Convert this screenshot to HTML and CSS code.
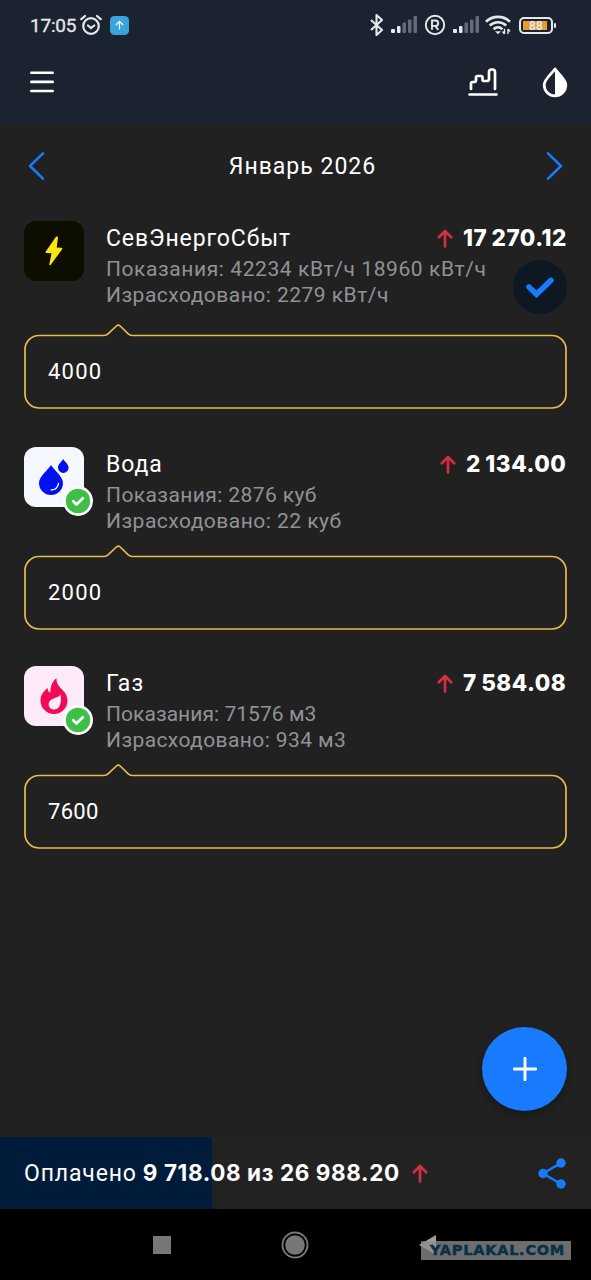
FILE: index.html
```html
<!DOCTYPE html>
<html lang="ru">
<head>
<meta charset="utf-8">
<title>Январь 2026</title>
<link rel="stylesheet" href="styles.css">
</head>
<body>
<svg class="defs" width="0" height="0">
  <symbol id="up" viewBox="0 0 16 19"><path d="M8 17.5V2M1.8 8.2L8 2l6.2 6.2" fill="none" stroke="#d0303f" stroke-width="2.7" stroke-linecap="round" stroke-linejoin="round"/></symbol>
  <symbol id="bubble" viewBox="0 0 543 86"><path d="M15 12.500H80q2.500 0 4.300-1.800L92.400 3Q94.300 1.200 96.200 3L104 10.700Q105.800 12.500 108.300 12.500H528A14 14 0 0 1 542 26.500V71A14 14 0 0 1 528 85H15A14 14 0 0 1 1 71V26.500A14 14 0 0 1 15 12.500Z" fill="none" stroke="#e6bc4a" stroke-width="1.700"/></symbol>
  <symbol id="paid" viewBox="0 0 30 30"><circle cx="15" cy="15" r="15" fill="#fff"/><circle cx="15" cy="15" r="12.200" fill="#3fbf48"/><path d="M10.200 15.300l3.300 3.200 6.300-6.200" fill="none" stroke="#fff" stroke-width="2.700" stroke-linecap="round" stroke-linejoin="round"/></symbol>
  <symbol id="signal" viewBox="0 0 27 18"><g fill="#e6e8ec"><rect x="0" y="13" width="4" height="4" rx="1"/><rect x="6" y="10" width="3.500" height="7" rx="1"/></g><g fill="#646b78"><rect x="11.500" y="6.500" width="3.500" height="10.500" rx="1"/><rect x="17" y="3.500" width="3.500" height="13.500" rx="1"/><rect x="22.500" y="0" width="3.500" height="17" rx="1"/></g></symbol>
</svg>
<main class="screen">
  <header class="top">
    <div class="status">
      <span class="clock">17:05</span>
      <svg class="alarm" width="22" height="22" viewBox="0 0 22 22" fill="none" stroke="#e6e8ec" stroke-width="2.200" stroke-linecap="round"><circle cx="11" cy="12" r="7.800"/><path d="M1.300 5.200L5 2M20.700 5.200L17 2M8 11.500l3 2.500 3.200-2.500"/></svg>
      <svg class="upload" width="19" height="19" viewBox="0 0 19 19"><rect width="19" height="19" rx="4.500" fill="#3ba3dc"/><path d="M9.500 13.500V5.300M5.800 9l3.700-3.700L13.200 9" fill="none" stroke="#fff" stroke-width="1.200"/></svg>
      <div class="indicators">
        <svg width="14" height="22" viewBox="0 0 14 22" fill="none" stroke="#e6e8ec" stroke-width="2.100" stroke-linejoin="round"><path d="M1 6l11 10-5.500 5V1L12 6 1 16"/></svg>
        <svg class="bars" width="27" height="18"><use href="#signal"/></svg>
        <svg class="reg" width="22" height="22" viewBox="0 0 22 22" fill="none" stroke="#e6e8ec" stroke-width="1.900"><circle cx="11" cy="11" r="9.200"/><path d="M8 15.800V6.500h3.500a2.700 2.700 0 0 1 0 5.400H8M11.300 12l3 3.800"/></svg>
        <svg class="bars" width="27" height="18"><use href="#signal"/></svg>
        <svg class="wifi" width="26" height="20" viewBox="0 0 26 20" fill="none" stroke="#e6e8ec" stroke-width="2.700"><path d="M1 6.800C7.500.2 18.500.2 25 6.800M4.800 10.600c4.800-4.500 11.600-4.500 16.400 0M8.600 14.200c2.600-2.400 6.200-2.400 8.800 0"/><path d="M10 16.200h6l-3 3z" fill="#e6e8ec" stroke="none"/><path d="M19.500 18.800v-5M19.500 19l-2-2.500M23 14v5M23 14l2 2.500" stroke-width="1.400"/></svg>
        <div class="battery"><span class="level">88</span></div>
      </div>
    </div>
    <div class="toolbar">
      <svg width="24" height="22" viewBox="0 0 24 22" stroke="#fff" stroke-width="2.600" stroke-linecap="round"><path d="M1.300 1.800h21.400M1.300 10.900h21.400M1.300 20h21.400"/></svg>
      <div class="tools">
        <svg width="30" height="28" viewBox="0 0 30 28" fill="none" stroke="#fff" stroke-width="2.700" stroke-linecap="round" stroke-linejoin="round"><path d="M1.500 26.500h27M3 21v-5.500q0-1.500 1.500-1.500H6q2 0 2-2V9.500Q8 8 9.500 8H13q1.500 0 1.500 1.500v2q0 1.500 1.500 1.500h3q2 0 2-2V4q0-2.500 2.500-2.500h1Q27 1.500 27 4v17"/></svg>
        <svg width="26" height="32" viewBox="0 0 26 32"><path d="M13 3C10 7.500 2.200 13 2.200 19a10.800 10.800 0 0 0 21.600 0C23.800 13 16 7.500 13 3Z" fill="none" stroke="#fff" stroke-width="2.800" stroke-linejoin="round"/><path d="M13 2c3 5 11 11 11 17a11 11 0 0 1-11 11z" fill="#fff"/></svg>
      </div>
    </div>
  </header>

  <nav class="month">
    <svg width="17" height="28" viewBox="0 0 17 28"><path d="M15 1.300L2 14l13 12.700" fill="none" stroke="#187bfd" stroke-width="2.500" stroke-linecap="round" stroke-linejoin="round"/></svg>
    <span class="month-name">Январь 2026</span>
    <svg width="17" height="28" viewBox="0 0 17 28"><path d="M2 1.300L15 14 2 26.700" fill="none" stroke="#187bfd" stroke-width="2.500" stroke-linecap="round" stroke-linejoin="round"/></svg>
  </nav>

  <section class="bills">
    <article class="bill tall">
      <div class="summary">
        <div class="tile power"><svg width="20" height="32" viewBox="0 0 20 32"><path d="M11.800 2L1.800 16.500q-.8 1.300.7 1.500l5 .3-2.200 11q0 1.500 1.300.6L18 14.500q.9-1.500-.7-1.700l-4.600-.3L14 2.500Q13.300.3 11.800 2Z" fill="#ffe414"/></svg></div>
        <div class="info">
          <div class="line"><span class="name n1">СевЭнергоСбыт</span><span class="sum"><svg width="16" height="19"><use href="#up"/></svg><b class="s1">17 270.12</b></span></div>
          <div class="detail d1">Показания: 42234 кВт/ч 18960 кВт/ч</div>
          <div class="detail d2">Израсходовано: 2279 кВт/ч</div>
        </div>
        <svg class="confirm" width="54" height="54" viewBox="0 0 54 54"><circle cx="27" cy="27" r="27" fill="#0e1822"/><path d="M16 27l7.500 7.300L38 20.300" fill="none" stroke="#187bfd" stroke-width="5.500" stroke-linecap="round"/></svg>
      </div>
      <div class="amount"><svg class="outline" width="543" height="86"><use href="#bubble"/></svg><span class="value">4000</span></div>
    </article>
    <article class="bill">
      <div class="summary">
        <div class="tile water"><svg width="32" height="38" viewBox="0 0 32 38"><path d="M13 7C10 12 1 18.500 1 25a12 12 0 0 0 24 0C25 18.500 16 12 13 7ZM25.200 1c-1.400 2.600-5.200 5.200-5.200 8.600a5.300 5.300 0 0 0 10.600 0C30.600 6.200 26.600 3.600 25.200 1Z" fill="#0010f0"/><path d="M20.500 25.500c-.6 3.800-3.600 6.300-7.200 6.500" fill="none" stroke="#f6f8ff" stroke-width="1.500" stroke-linecap="round"/></svg><svg class="badge" width="30" height="30"><use href="#paid"/></svg></div>
        <div class="info">
          <div class="line"><span class="name n2">Вода</span><span class="sum"><svg width="16" height="19"><use href="#up"/></svg><b class="s2">2 134.00</b></span></div>
          <div class="detail">Показания: 2876 куб</div>
          <div class="detail d2">Израсходовано: 22 куб</div>
        </div>
      </div>
      <div class="amount"><svg class="outline" width="543" height="86"><use href="#bubble"/></svg><span class="value">2000</span></div>
    </article>
    <article class="bill">
      <div class="summary">
        <div class="tile gas"><svg width="28" height="36" viewBox="0 0 28 36"><path d="M16.500 0C12 4 10.500 8.500 10.200 15 8.500 14 7.800 12 7.500 10 3.500 13.500.5 17 .5 22.500a13.500 13.500 0 0 0 27 0c0-4.500-2-7.500-5-10.500C18.500 8 16.200 5 16.500 0Z" fill="#f20a55"/><path d="M20.500 16.500C19 20.500 9 19.500 8.600 26c0 3.300 2.500 5.500 5.600 5.500 5 0 7.900-6 6.300-15Z" fill="#ffeafa"/></svg><svg class="badge" width="30" height="30"><use href="#paid"/></svg></div>
        <div class="info">
          <div class="line"><span class="name n3">Газ</span><span class="sum"><svg width="16" height="19"><use href="#up"/></svg><b class="s3">7 584.08</b></span></div>
          <div class="detail d5">Показания: 71576 м3</div>
          <div class="detail">Израсходовано: 934 м3</div>
        </div>
      </div>
      <div class="amount"><svg class="outline" width="543" height="86"><use href="#bubble"/></svg><span class="value v3">7600</span></div>
    </article>
  </section>

  <button class="add" aria-label="Добавить"><svg width="24" height="24" viewBox="0 0 24 24"><path d="M12 1.300v21.400M1.300 12h21.400" stroke="#fff" stroke-width="2.900" stroke-linecap="round"/></svg></button>

  <footer class="total">
    <span class="paid-label">Оплачено</span><b class="paid-sum">9 718.08 из 26 988.20</b>
    <svg class="trend" width="16" height="19"><use href="#up"/></svg>
    <svg class="share" width="28" height="31" viewBox="0 0 28 31" fill="#187bfd"><path d="M23 5L5 15.500 23 26" fill="none" stroke="#187bfd" stroke-width="2.500"/><circle cx="23" cy="5" r="4.700"/><circle cx="5" cy="15.500" r="4.700"/><circle cx="23" cy="26" r="4.700"/></svg>
  </footer>

  <div class="system">
    <span class="recent"></span>
    <svg class="home" width="28" height="28" viewBox="0 0 28 28"><circle cx="14" cy="14" r="12.500" fill="none" stroke="#777" stroke-width="1.900"/><circle cx="14" cy="14" r="9.800" fill="#777"/></svg>
    <svg class="back" width="19" height="20" viewBox="0 0 19 20"><path d="M18 0v20L1 10z" fill="#a0a0a0"/></svg>
    <span class="watermark">YAPLAKAL.COM</span>
  </div>
</main>
</body>
</html>
```
FILE: styles.css
```css
* { box-sizing: border-box; }
body { margin: 0; background: #212121; color: #fff; font-family: Roboto, "Noto Sans", sans-serif; }
svg { display: block; flex: none; }
.defs { position: absolute; }
.screen { position: relative; width: 591px; height: 1280px; overflow: hidden; display: flex; flex-direction: column; background: #212121; }

.top { height: 124px; background: #1b2330; flex: none; }
.status { display: flex; align-items: center; height: 50px; padding: 0 35px 0 30px; color: #e6e8ec; }
.clock { width: 50px; font-size: 19px; font-weight: 400; letter-spacing: -.2px; -webkit-text-stroke: .3px #e6e8ec; white-space: nowrap; line-height: 24px; padding-top: 2px; }
.upload { margin-left: 8px; }
.indicators { display: flex; align-items: center; margin-left: auto; }
.bars { margin-left: 7px; }
.reg { margin-left: 6px; }
.wifi { margin-left: 5px; }
.battery { position: relative; display: flex; width: 34px; height: 17px; padding: 2px; margin-left: 8px; margin-right: 3px; border: 2px solid #e6e8ec; border-radius: 5px; }
.battery::after { content: ""; position: absolute; right: -5px; top: 4px; width: 2px; height: 5px; background: #e6e8ec; border-radius: 1px; }
.level { width: 24px; height: 9px; background: #e59b2d; font-size: 12px; font-weight: 700; line-height: 10px; text-align: center; padding-left: 2px; }
.toolbar { display: flex; justify-content: space-between; align-items: center; height: 64px; padding: 0 23px 0 30px; }
.tools { display: flex; align-items: center; gap: 44px; }

.month { display: flex; align-items: center; justify-content: space-between; height: 84px; padding: 0 28px; flex: none; }
.month-name { margin-left: 14px; font-size: 23px; letter-spacing: 1px; white-space: nowrap; }

.bills { padding: 13px 24px 0; }
.bill { height: 219px; }
.bill.tall { height: 226px; }
.summary { display: flex; position: relative; height: 97px; gap: 22px; }
.tall .summary { height: 102px; }
.tile { position: relative; display: flex; align-items: center; justify-content: center; width: 60px; height: 60px; border-radius: 12px; flex: none; }
.power { background: #0d0d00; }
.water { background: #f6f8ff; }
.gas { background: #ffeafa; }
.badge { position: absolute; left: 39px; top: 39px; }
.info { flex: 1; padding-top: 3px; }
.line { display: flex; justify-content: space-between; align-items: center; height: 28px; }
.name { font-size: 23px; white-space: nowrap; }
.n1, .n2 { letter-spacing: .9px; }
.n3 { letter-spacing: 1.3px; }
.sum { display: flex; align-items: center; gap: 10px; font-size: 22.500px; white-space: nowrap; }
.sum b { padding-bottom: 2px; font-family: Inter, Roboto, sans-serif; font-weight: 850; word-spacing: -1px; }
.s1 { width: 104px; letter-spacing: .5px; }
.s2 { width: 101px; letter-spacing: .55px; }
.s3 { width: 104px; letter-spacing: .5px; }
.detail { height: 26px; line-height: 35px; font-size: 21px; color: #929296; white-space: nowrap; letter-spacing: .4px; }
.detail.d1 { letter-spacing: .58px; }
.detail.d2 { letter-spacing: .48px; }
.detail.d5 { letter-spacing: .05px; }
.confirm { position: absolute; right: 0; top: 39px; }
.amount { position: relative; display: flex; align-items: center; height: 86px; padding: 11px 24px 0; }
.outline { position: absolute; left: 0; top: 0; }
.value { font-size: 22px; letter-spacing: 1.2px; }
.v3 { letter-spacing: .3px; }

.add { position: absolute; left: 482px; top: 1027px; width: 85px; height: 84px; border: 0; padding: 0; border-radius: 50%; background: #187bfd; display: flex; align-items: center; justify-content: center; box-shadow: 0 4px 10px rgba(0,0,0,.3); }
.total { display: flex; align-items: center; height: 72px; margin-top: auto; padding: 0 25px 0 24px; background: linear-gradient(90deg, #011b3b 212px, #222 212px); font-size: 23px; white-space: nowrap; flex: none; }
.paid-label { letter-spacing: .85px; }
.paid-sum { width: 256px; margin-left: 6px; padding-bottom: 2px; font-family: Inter, Roboto, sans-serif; font-size: 22.500px; font-weight: 650; letter-spacing: .6px; }
.trend { margin-left: 13px; }
.share { margin-left: auto; }
.system { display: flex; position: relative; align-items: center; height: 71px; padding-left: 153px; background: #000; flex: none; }
.recent { width: 18px; height: 18px; background: #777; }
.home { margin-left: 110px; }
.back { margin-left: 109px; }
.watermark { position: absolute; left: 421px; top: 32px; width: 150px; height: 19px; padding-left: 9px; background: rgba(140,140,140,.78); color: #08304a; font: bold 14.500px/19px "DejaVu Sans", sans-serif; letter-spacing: .75px; -webkit-text-stroke: .5px #08304a; white-space: nowrap; }
```
